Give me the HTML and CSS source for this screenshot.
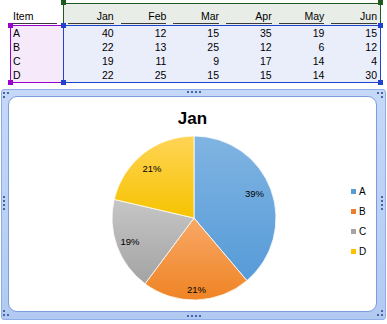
FILE: index.html
```html
<!DOCTYPE html>
<html>
<head>
<meta charset="utf-8">
<link rel="stylesheet" href="styles.css">
</head>
<body>
<div class="sheet">
  <div class="head">
    <div class="item-h"><span class="ul">Item</span></div>
    <div class="hbox">
      <div class="hc"><span class="ul">Jan</span></div>
      <div class="hc"><span class="ul">Feb</span></div>
      <div class="hc"><span class="ul">Mar</span></div>
      <div class="hc"><span class="ul">Apr</span></div>
      <div class="hc"><span class="ul">May</span></div>
      <div class="hc"><span class="ul">Jun</span></div>
      <span class="h g tl"></span><span class="h g tr"></span>
    </div>
  </div>
  <div class="body">
    <div class="ibox">
      <div class="ic">A</div><div class="ic">B</div><div class="ic">C</div><div class="ic">D</div>
      <span class="h p tl"></span><span class="h p bl"></span><span class="h p br"></span>
    </div>
    <div class="dbox">
      <div>40</div><div>12</div><div>15</div><div>35</div><div>19</div><div>15</div>
      <div>22</div><div>13</div><div>25</div><div>12</div><div>6</div><div>12</div>
      <div>19</div><div>11</div><div>9</div><div>17</div><div>14</div><div>4</div>
      <div>22</div><div>25</div><div>15</div><div>15</div><div>14</div><div>30</div>
      <span class="h b tl"></span><span class="h b tr"></span><span class="h b bl"></span><span class="h b br"></span>
    </div>
  </div>
</div>

<div class="chart">
  <div class="plot">
    <div class="title">Jan</div>
    <div class="prow">
      <svg class="pie" width="166" height="166" viewBox="0 0 166 166">
        <defs>
          <linearGradient id="gA" x1="0" y1="0" x2="0" y2="1">
            <stop offset="0" stop-color="#80b4e2"/><stop offset="1" stop-color="#569bd8"/>
          </linearGradient>
          <linearGradient id="gB" x1="0" y1="0" x2="0" y2="1">
            <stop offset="0" stop-color="#f8a867"/><stop offset="1" stop-color="#ef8424"/>
          </linearGradient>
          <linearGradient id="gC" x1="0" y1="0" x2="0" y2="1">
            <stop offset="0" stop-color="#c6c6c6"/><stop offset="1" stop-color="#a3a3a3"/>
          </linearGradient>
          <linearGradient id="gD" x1="0" y1="0" x2="0" y2="1">
            <stop offset="0" stop-color="#ffd456"/><stop offset="1" stop-color="#f6c300"/>
          </linearGradient>
        </defs>
        <path d="M83,83 L83,1 A82,82 0 0 1 135.91,145.65 Z" fill="url(#gA)" stroke="#fff" stroke-width="0.8"/>
        <path d="M83,83 L135.91,145.65 A82,82 0 0 1 34,148.75 Z" fill="url(#gB)" stroke="#fff" stroke-width="0.8"/>
        <path d="M83,83 L34,148.75 A82,82 0 0 1 3.14,64.4 Z" fill="url(#gC)" stroke="#fff" stroke-width="0.8"/>
        <path d="M83,83 L3.14,64.4 A82,82 0 0 1 83,1 Z" fill="url(#gD)" stroke="#fff" stroke-width="0.8"/>
        <text x="143.5" y="61.5" class="pl">39%</text>
        <text x="41" y="36.5" class="pl">21%</text>
        <text x="19" y="109.5" class="pl">19%</text>
        <text x="85.5" y="157.5" class="pl">21%</text>
      </svg>
      <div class="legend">
        <div class="li"><span class="sw sa"></span>A</div>
        <div class="li"><span class="sw sb"></span>B</div>
        <div class="li"><span class="sw sc"></span>C</div>
        <div class="li"><span class="sw sd"></span>D</div>
      </div>
    </div>
  </div>
  <span class="grip gh gtop"></span>
  <span class="grip gh gbot"></span>
  <span class="grip gv gright"></span>
  <span class="grip gv gleft"></span>
  <span class="grip c ctl"></span>
  <span class="grip c ctr"></span>
  <span class="grip c cbl"></span>
  <span class="grip c cbr"></span>
</div>
</body>
</html>
```

FILE: styles.css
```css
html, body {
  margin: 0;
  padding: 0;
}
body {
  width: 387px;
  height: 324px;
  overflow: hidden;
  background: #fff;
  font-family: "Liberation Sans", Arial, sans-serif;
  color: #000;
}

/* ---------- sheet ---------- */
.sheet {
  padding: 3px 0 0 10px;
  font-size: 10.5px;
}
.head {
  display: flex;
  height: 22px;
}
.item-h {
  width: 53px;
  display: flex;
  align-items: flex-end;
  padding-bottom: 1px;
  box-sizing: border-box;
}
.item-h .ul {
  flex: 1;
  margin: 0 6px 0 3px;
  text-align: left;
}
.ul {
  display: block;
  border-bottom: 1px solid #3a3a3a;
  line-height: 13px;
}
.hbox {
  position: relative;
  width: 318px;
  box-sizing: border-box;
  display: flex;
  border: 1px solid #1f5b1f;
  border-bottom: none;
  background: #e8ede8;
}
.hc {
  flex: 1;
  display: flex;
  align-items: flex-end;
  padding-bottom: 1px;
}
.hc .ul {
  flex: 1;
  margin: 0 3px 0 4px;
  text-align: right;
}

.body {
  display: flex;
}
.ibox {
  position: relative;
  width: 53px;
  box-sizing: border-box;
  border: 1px solid #9a00cc;
  border-right: none;
  background: #f6e9f9;
}
.ic {
  height: 14px;
  line-height: 14px;
  padding-left: 2px;
}
.dbox {
  position: relative;
  width: 318px;
  box-sizing: border-box;
  border: 1px solid #1d43cf;
  background: #eaeefb;
  display: grid;
  grid-template-columns: repeat(6, 1fr);
  grid-auto-rows: 14px;
}
.dbox div {
  text-align: right;
  padding-right: 3px;
  line-height: 14px;
}

/* selection handles */
.h {
  position: absolute;
  width: 5px;
  height: 5px;
}
.h.g { background: #1f5b1f; }
.h.p { background: #9a00cc; }
.h.b { background: #1d43cf; }
.h.tl { left: -3px; top: -3px; }
.h.tr { right: -3px; top: -3px; }
.h.bl { left: -3px; bottom: -3px; }
.h.br { right: -3px; bottom: -3px; }
.hbox .h.tl, .hbox .h.tr { top: -4px; }

/* ---------- chart ---------- */
.chart {
  position: relative;
  margin: 6px 1px 0 1px;
  height: 231px;
  box-sizing: border-box;
  border: 1px solid #8eaee6;
  border-radius: 3px;
  background: linear-gradient(#c5d8f8, #b2caf2);
  padding: 6px 8px 7px 6px;
}
.plot {
  height: 100%;
  box-sizing: border-box;
  background: #fff;
  border: 1px solid #7c9cdd;
  border-radius: 9px;
}
.title {
  margin-top: 12px;
  text-align: center;
  font-weight: bold;
  font-size: 17px;
  line-height: 20px;
}
.prow {
  display: flex;
  margin-top: 6px;
}
.pie {
  display: block;
  margin-left: 102px;
}
.pl {
  font-family: "Liberation Sans", Arial, sans-serif;
  font-size: 9.5px;
  text-anchor: middle;
  fill: #000;
}
.legend {
  margin-left: 74px;
  margin-top: 46px;
  font-size: 10px;
}
.li {
  display: flex;
  align-items: center;
  height: 20px;
  gap: 3px;
}
.sw {
  width: 5px;
  height: 5px;
}
.sa { background: #5b9bd5; }
.sb { background: #ed7d31; }
.sc { background: #a5a5a5; }
.sd { background: #ffc000; }

/* grips */
.grip {
  position: absolute;
  width: 2px;
  height: 2px;
  background: #46669f;
}
.gh {
  box-shadow: 4px 0 #46669f, 8px 0 #46669f, 12px 0 #46669f;
}
.gv {
  box-shadow: 0 4px #46669f, 0 8px #46669f, 0 12px #46669f;
}
.gtop { left: 185px; top: 1px; }
.gbot { left: 185px; top: 225px; }
.gright { left: 379px; top: 106px; }
.gleft { left: 1px; top: 106px; }
.ctl { left: 1px; top: 2px; box-shadow: 4px 0 #46669f, 0 4px #46669f; }
.ctr { left: 375px; top: 2px; box-shadow: 4px 0 #46669f, 4px 4px #46669f; }
.cbl { left: 1px; top: 220px; box-shadow: 0 4px #46669f, 4px 4px #46669f; }
.cbr { left: 379px; top: 220px; box-shadow: 0 4px #46669f, -4px 4px #46669f; }
```
